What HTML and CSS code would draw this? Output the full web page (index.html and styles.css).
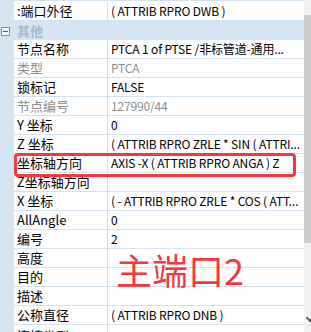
FILE: index.html
```
<!DOCTYPE html>
<html>

<head>
    <title>属性</title>
    <link rel="stylesheet" href="styles.css">
</head>

<body>
    <div class="panel">
        <div class="grid">
            <div class="row">
                <div class="name">:端口外径</div>
                <div class="value">( ATTRIB RPRO DWB )</div>
            </div>
            <div class="row category">
                <span class="toggle"></span>
                <div class="catname">其他</div>
            </div>
            <div class="row">
                <div class="name">节点名称</div>
                <div class="value">PTCA 1 of PTSE /非标管道-通用...</div>
            </div>
            <div class="row readonly">
                <div class="name">类型</div>
                <div class="value">PTCA</div>
            </div>
            <div class="row">
                <div class="name">锁标记</div>
                <div class="value">FALSE</div>
            </div>
            <div class="row readonly">
                <div class="name">节点编号</div>
                <div class="value">127990/44</div>
            </div>
            <div class="row">
                <div class="name">Y 坐标</div>
                <div class="value">0</div>
            </div>
            <div class="row">
                <div class="name">Z 坐标</div>
                <div class="value">( ATTRIB RPRO ZRLE * SIN ( ATTRI...</div>
            </div>
            <div class="row">
                <div class="name">坐标轴方向</div>
                <div class="value">AXIS -X ( ATTRIB RPRO ANGA ) Z</div>
            </div>
            <div class="row">
                <div class="name">Z坐标轴方向</div>
                <div class="value"></div>
            </div>
            <div class="row">
                <div class="name">X 坐标</div>
                <div class="value">( - ATTRIB RPRO ZRLE * COS ( ATT...</div>
            </div>
            <div class="row">
                <div class="name">AllAngle</div>
                <div class="value">0</div>
            </div>
            <div class="row">
                <div class="name">编号</div>
                <div class="value">2</div>
            </div>
            <div class="row">
                <div class="name">高度</div>
                <div class="value"></div>
            </div>
            <div class="row">
                <div class="name">目的</div>
                <div class="value"></div>
            </div>
            <div class="row">
                <div class="name">描述</div>
                <div class="value"></div>
            </div>
            <div class="row">
                <div class="name">公称直径</div>
                <div class="value">( ATTRIB RPRO DNB )</div>
            </div>
            <div class="row last">
                <div class="name">连接类型</div>
                <div class="value"></div>
            </div>
        </div>

        <div class="scrollbar">
            <div class="thumb"></div>
            <div class="arrow"></div>
        </div>

        <div class="highlight"></div>
        <div class="note">主端口2</div>
    </div>
</body>

</html>
```

FILE: styles.css
```
body {
    margin: 0;
    background-color: #fff;
    font-family: "Noto Sans CJK SC", sans-serif;
    font-size: 13px;
    color: #000;
}

.panel {
    position: relative;
    display: flex;
    width: 311px;
    height: 332px;
    overflow: hidden;
}

.grid {
    width: 304px;
    padding-top: 1px;
    background: linear-gradient(to right, #d6e5f4 14px, #fff 14px);
    border-top: 1px solid #d3e1f0;
    box-sizing: border-box;
    height: 332px;
}

.row {
    display: grid;
    grid-template-columns: 14px 94px 196px;
    height: 19px;
}

.row .name {
    grid-column: 2;
    border-right: 1px solid #d3e1f0;
    border-bottom: 1px solid #d3e1f0;
    padding-left: 3px;
    line-height: 18px;
    white-space: nowrap;
    overflow: hidden;
}

.row .value {
    border-bottom: 1px solid #d3e1f0;
    padding-left: 3px;
    font-size: 12px;
    letter-spacing: -0.15px;
    line-height: 18px;
    white-space: nowrap;
    overflow: hidden;
}

.row.last .name {
    line-height: 22px;
}

.row.readonly .name,
.row.readonly .value {
    color: #8d8d8d;
}

.row.category {
    background-color: #d6e5f4;
    position: relative;
}

.catname {
    grid-column: 2 / 4;
    padding-left: 3px;
    line-height: 19px;
    font-weight: bold;
    color: #a4bad2;
}

.toggle {
    position: absolute;
    left: 1px;
    top: 6px;
    width: 7px;
    height: 7px;
    border: 1px solid #8a8a8a;
    background-color: #f4f7fb;
}

.toggle::after {
    content: "";
    position: absolute;
    left: 1px;
    top: 3px;
    width: 5px;
    height: 1px;
    background-color: #555;
}

.scrollbar {
    width: 7px;
    background-color: #f0f0f0;
    position: relative;
}

.thumb {
    margin-top: 15px;
    height: 228px;
    background-color: #cdcdcd;
}

.arrow {
    position: absolute;
    left: 3px;
    top: 315px;
    width: 4px;
    height: 4px;
    border-right: 2px solid #606060;
    border-bottom: 2px solid #606060;
    transform: rotate(45deg);
}

.highlight {
    position: absolute;
    left: 14px;
    top: 153px;
    width: 276px;
    height: 18px;
    border: 3px solid #f4383f;
    border-radius: 4px;
}

.note {
    position: absolute;
    left: 116px;
    top: 247px;
    font-family: "Noto Sans CJK SC", sans-serif;
    font-size: 36px;
    line-height: 44px;
    color: #f4383f;
}
```
